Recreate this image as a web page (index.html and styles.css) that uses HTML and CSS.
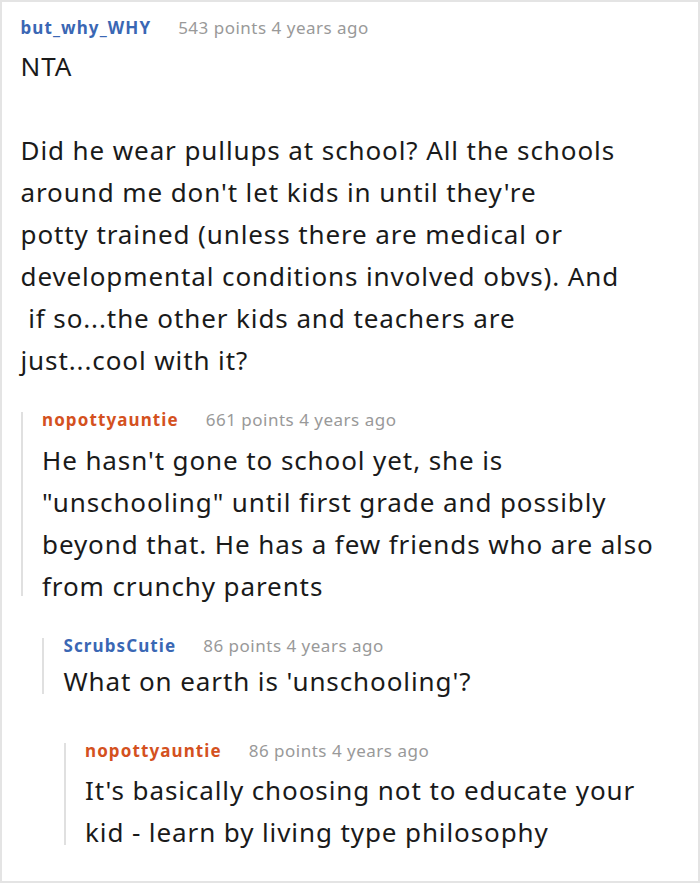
FILE: index.html
```html
<!DOCTYPE html>
<html lang="en">
<head>
<meta charset="utf-8">
<title>Comments</title>
<link rel="stylesheet" href="styles.css">
</head>
<body>
<div class="page">
  <div class="comment">
    <div class="comment-main">
      <div class="comment-head">
        <span class="author author-blue">but_why_WHY</span>
        <span class="meta">543 points 4 years ago</span>
      </div>
      <div class="comment-body">NTA<br><br>Did he wear pullups at school? All the schools<br>around me don't let kids in until they're<br>potty trained (unless there are medical or<br>developmental conditions involved obvs). And<br>&nbsp;if so...the other kids and teachers are<br>just...cool with it?</div>
    </div>
    <div class="replies">
      <div class="comment reply">
        <div class="comment-main">
          <div class="comment-head">
            <span class="author author-orange">nopottyauntie</span>
            <span class="meta">661 points 4 years ago</span>
          </div>
          <div class="comment-body">He hasn't gone to school yet, she is<br>"unschooling" until first grade and possibly<br>beyond that. He has a few friends who are also<br>from crunchy parents</div>
        </div>
        <div class="replies">
          <div class="comment reply">
            <div class="comment-main">
              <div class="comment-head">
                <span class="author author-blue">ScrubsCutie</span>
                <span class="meta">86 points 4 years ago</span>
              </div>
              <div class="comment-body comment-body-tight">What on earth is 'unschooling'?</div>
            </div>
            <div class="replies replies-deep">
              <div class="comment reply">
                <div class="comment-main">
                  <div class="comment-head">
                    <span class="author author-orange">nopottyauntie</span>
                    <span class="meta">86 points 4 years ago</span>
                  </div>
                  <div class="comment-body comment-body-last">It's basically choosing not to educate your<br>kid - learn by living type philosophy</div>
                </div>
              </div>
            </div>
          </div>
        </div>
      </div>
    </div>
  </div>
</div>
</body>
</html>
```

FILE: styles.css
```css
html, body {
  margin: 0;
  padding: 0;
  background: #ffffff;
}

.page {
  box-sizing: border-box;
  width: 700px;
  height: 883px;
  border: 2px solid #e4e4e4;
  padding: 18px 0 0 18.5px;
  font-family: "Noto Sans", "Open Sans", sans-serif;
  color: #1a1a1a;
  overflow: hidden;
}

.comment-main {
  display: flex;
  flex-direction: column;
}

.comment-head {
  display: flex;
  align-items: baseline;
  gap: 27px;
  font-size: 17px;
  line-height: 16px;
  white-space: nowrap;
}

.author {
  font-weight: 700;
  letter-spacing: 1.1px;
}

.author-blue {
  color: #3a67b4;
}

.author-orange {
  color: #d4511e;
}

.meta {
  color: #999999;
  letter-spacing: 0.5px;
}

.comment-body {
  margin-top: 9px;
  margin-bottom: -11px;
  font-size: 26px;
  line-height: 42px;
  letter-spacing: 0.9px;
  white-space: nowrap;
}

.reply > .comment-main > .comment-body {
  margin-top: 11px;
}

.reply > .comment-main > .comment-body-tight {
  margin-top: 6px;
  margin-bottom: -8px;
}

.reply > .comment-main > .comment-body-last {
  margin-top: 10px;
  margin-bottom: -8px;
}

.replies {
  margin-top: 42px;
}

.replies-deep {
  margin-top: 49px;
}

.reply > .comment-main {
  border-left: 2px solid #e0e0e0;
  padding-left: 19.5px;
}

.reply > .replies {
  margin-left: 21.5px;
}
```
